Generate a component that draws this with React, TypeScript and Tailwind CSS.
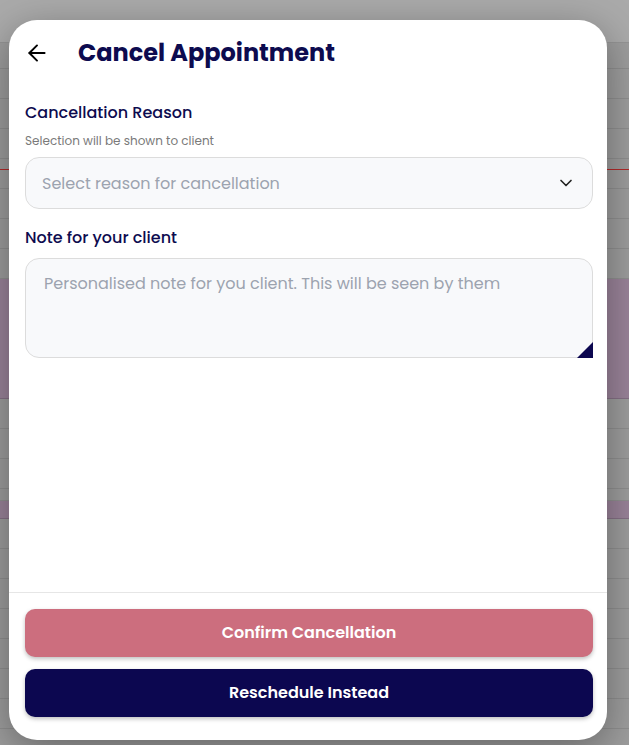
import React from 'react';
import { ArrowLeft, ChevronDown } from 'lucide-react';

// background page rows behind the overlay: [height, kind]
const rows: { h: number; kind: 'row' | 'purple' | 'red' }[] = [
  { h: 26, kind: 'row' },
  { h: 30, kind: 'row' },
  { h: 30, kind: 'row' },
  { h: 30, kind: 'row' },
  { h: 11, kind: 'red' },
  { h: 19, kind: 'row' },
  { h: 30, kind: 'row' },
  { h: 30, kind: 'row' },
  { h: 30, kind: 'row' },
  { h: 120, kind: 'purple' },
  { h: 30, kind: 'row' },
  { h: 30, kind: 'row' },
  { h: 30, kind: 'row' },
  { h: 12, kind: 'row' },
  { h: 18, kind: 'purple' },
  { h: 30, kind: 'row' },
  { h: 30, kind: 'row' },
  { h: 30, kind: 'row' },
  { h: 30, kind: 'row' },
  { h: 30, kind: 'row' },
  { h: 30, kind: 'row' },
  { h: 30, kind: 'row' },
];

const rowClass = {
  row: 'border-b border-[#8f8f8f] bg-[#9d9d9d]',
  red: 'border-b border-[#b22a2a] bg-[#9d9d9d]',
  purple: 'border-b border-[#857085] bg-[#9a8399]',
};

export default function App() {
  return (
    <div
      className="relative w-full h-[745px] overflow-hidden bg-[#9d9d9d]"
      style={{ fontFamily: 'Poppins, Inter, "Noto Sans", sans-serif' }}
    >
      {/* page behind the overlay */}
      <div className="flex flex-col">
        <div className="h-[43px] bg-[#aaaaaa] border-b border-[#959595]" />
        {rows.map((r, i) => (
          <div key={i} className={rowClass[r.kind]} style={{ height: r.h }} />
        ))}
      </div>

      {/* modal */}
      <div className="absolute left-[9px] top-[20px] w-[598px] h-[720px] bg-white rounded-[28px] shadow-[0_10px_40px_rgba(0,0,0,0.35)] flex flex-col overflow-hidden">
        <div className="flex-1 pl-4 pr-[14px]">
          {/* header */}
          <div className="flex items-center h-8 mt-[17px]">
            <ArrowLeft size={26} strokeWidth={1.8} className="text-black -ml-[1px]" />
            <h1 className="ml-[28px] text-[24px] font-bold text-[#0d0b4f]">
              Cancel Appointment
            </h1>
          </div>

          <p className="mt-8 text-[16px] leading-6 font-medium text-[#0d0b4f]">Cancellation Reason</p>
          <p className="mt-2 text-[12px] leading-4 text-[#7a7a7a]">Selection will be shown to client</p>

          <div className="mt-2 h-[52px] rounded-[14px] border border-[#dcdcdc] bg-[#f8f9fb] flex items-center justify-between pl-4 pr-4 pt-[2px]">
            <span className="text-[16px] text-[#9ca3af]">Select reason for cancellation</span>
            <ChevronDown size={20} strokeWidth={2} className="text-[#222] -mt-[2px]" />
          </div>

          <p className="mt-[17px] text-[16px] leading-6 font-medium text-[#0d0b4f]">Note for your client</p>

          <div className="relative mt-2 h-[100px]">
            <textarea
              className="block w-full h-full resize-none rounded-[14px] rounded-br-none border border-[#dcdcdc] bg-[#f8f9fb] px-[18px] pt-[13px] pb-[11px] text-[16px] leading-6 outline-none placeholder:text-[#9ca3af]"
              placeholder="Personalised note for you client. This will be seen by them"
            />
            <div className="absolute right-0 bottom-0 w-4 h-4 bg-[#0c0750] [clip-path:polygon(100%_0,100%_100%,0_100%)]" />
          </div>
        </div>

        {/* footer */}
        <div className="border-t border-[#e6e6e6] pl-4 pr-[14px] pt-4 pb-[23px] flex flex-col gap-3">
          <button className="h-12 rounded-[10px] bg-[#cc6e7e] text-white text-[16px] font-semibold shadow-[0_2px_4px_rgba(0,0,0,0.25)]">
            Confirm Cancellation
          </button>
          <button className="h-12 rounded-[10px] bg-[#0c0750] text-white text-[16px] font-semibold shadow-[0_2px_4px_rgba(0,0,0,0.25)]">
            Reschedule Instead
          </button>
        </div>
      </div>
    </div>
  );
}
